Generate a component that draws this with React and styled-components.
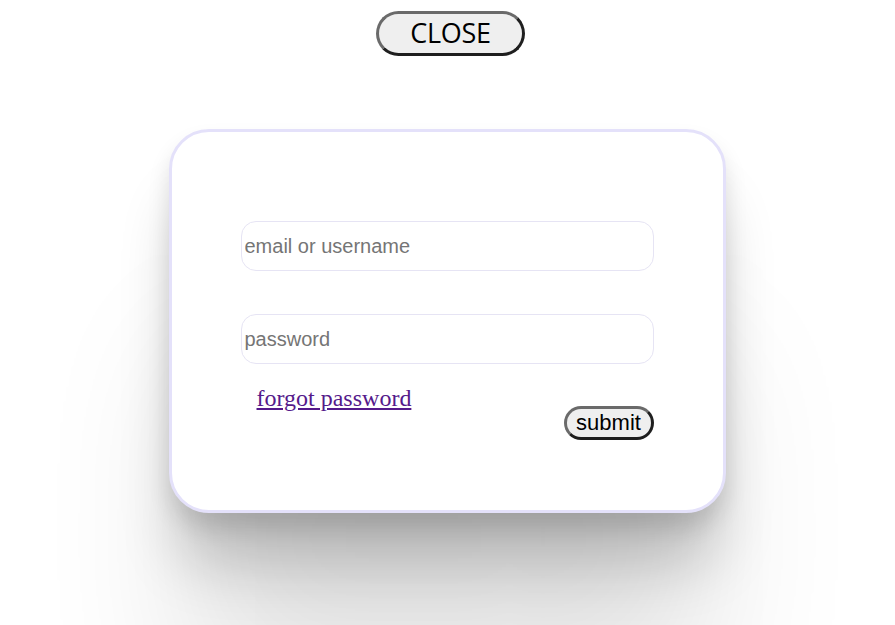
import React from "react";
import styled, { createGlobalStyle } from "styled-components";

const GlobalStyle = createGlobalStyle`
  html, body {
    margin: 0;
    padding: 0;
    background: #ffffff;
    overflow: hidden;
  }
`;

const Page = styled.div`
  display: flex;
  flex-direction: column;
  align-items: center;
  padding-top: 11px;
  width: 895px;
  height: 625px;
  box-sizing: border-box;
`;

const PillButton = styled.button`
  box-sizing: border-box;
  background: #efefef;
  color: #000;
  border-width: 3px;
  border-style: solid;
  border-color: #6a6a6a #1f1f1f #1f1f1f #6a6a6a;
  border-radius: 999px;
  font-family: ${(p) => p.$font};
  font-size: ${(p) => p.$size}px;
  line-height: 1;
  padding: 0;
  cursor: pointer;
  display: flex;
  align-items: center;
  justify-content: center;
`;

const CloseButton = styled(PillButton)`
  width: 149px;
  height: 45px;
  margin-left: 6px;
  padding-bottom: 2px;
  letter-spacing: -0.3px;
`;

const SubmitButton = styled(PillButton)`
  width: 90px;
  height: 34px;
  margin-top: 42px;
  padding-bottom: 1px;
`;

const Card = styled.div`
  box-sizing: border-box;
  width: 557px;
  height: 384px;
  margin-top: 73px;
  margin-right: 1px;
  border: 3px solid #e4e1fa;
  border-radius: 40px;
  background: #fff;
  box-shadow:
    0 14px 22px rgba(0, 0, 0, 0.12),
    0 60px 60px -10px rgba(0, 0, 0, 0.2),
    0 200px 150px -20px rgba(0, 0, 0, 0.12);
  padding: 89px 69px 0 69px;
`;

const Form = styled.form`
  display: flex;
  flex-direction: column;
  width: 413px;
`;

const Field = styled.input`
  box-sizing: border-box;
  width: 413px;
  height: 50px;
  border: 1px solid #e6e4f4;
  border-radius: 15px;
  padding: 1px 3px;
  font-family: "Liberation Sans", Arial, sans-serif;
  font-size: 20px;
  color: #000;
  outline: none;
  margin-bottom: ${(p) => p.$gap}px;
  &::placeholder {
    color: #757575;
  }
`;

const Footer = styled.div`
  display: flex;
  justify-content: space-between;
  align-items: flex-start;
  padding-left: 16px;
`;

const Forgot = styled.a`
  font-family: "Liberation Serif", "Times New Roman", serif;
  font-size: 24px;
  color: #551a8b;
  text-decoration: underline;
  margin-top: 21px;
  line-height: 1.15;
`;

export default function App() {
  return (
    <>
      <GlobalStyle />
      <Page>
        <CloseButton $size={27} $font={'"Open Sans", "Noto Sans", sans-serif'}>
          CLOSE
        </CloseButton>
        <Card>
          <Form onSubmit={(e) => e.preventDefault()}>
            <Field $gap={43} type="text" placeholder="email or username" />
            <Field $gap={0} type="password" placeholder="password" />
            <Footer>
              <Forgot href="#">forgot password</Forgot>
              <SubmitButton
                type="submit"
                $size={22}
                $font={'"Liberation Sans", Arial, sans-serif'}
              >
                submit
              </SubmitButton>
            </Footer>
          </Form>
        </Card>
      </Page>
    </>
  );
}
